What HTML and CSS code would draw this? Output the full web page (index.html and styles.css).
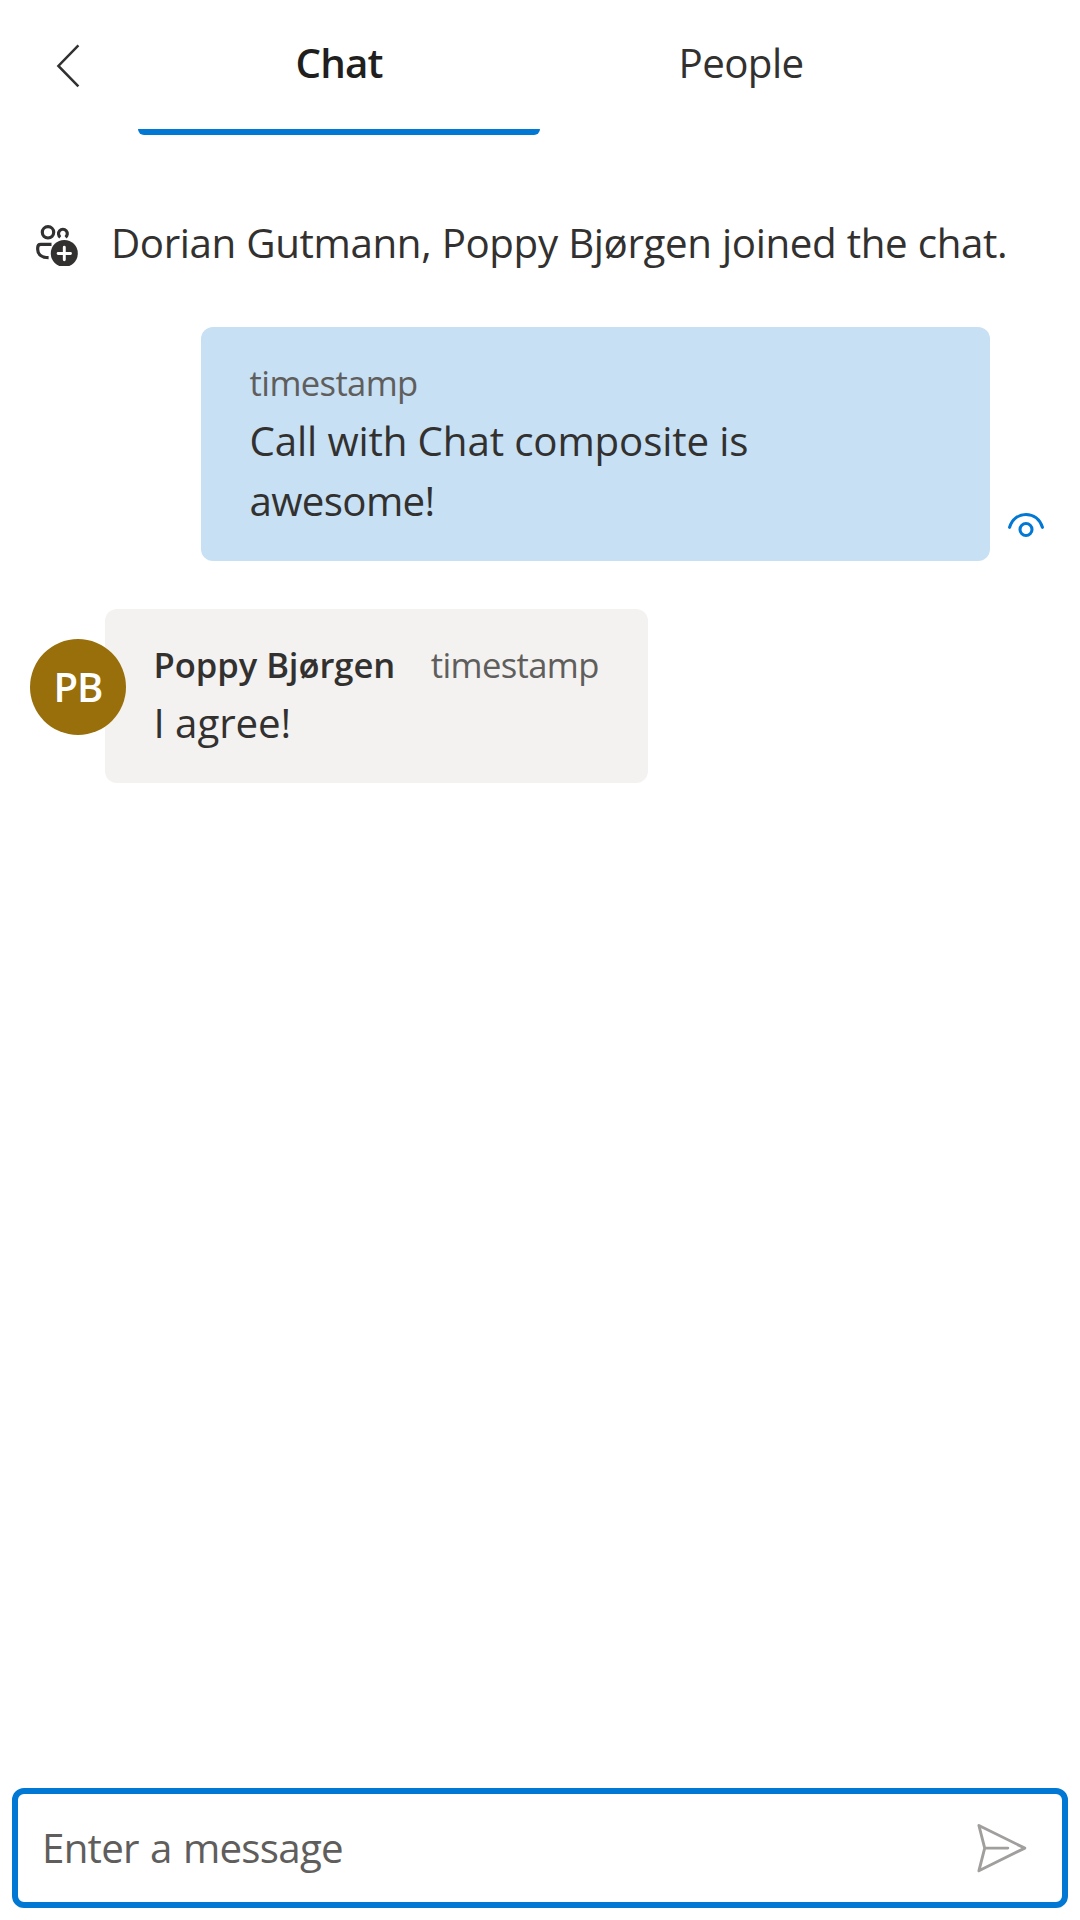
FILE: index.html
```html
<!DOCTYPE html>
<html lang="en">
<head>
<meta charset="utf-8">
<title>Chat</title>
<link rel="stylesheet" href="styles.css">
</head>
<body>
<div class="app">
  <header class="header">
    <button class="back" aria-label="Back">
      <svg width="28" height="48" viewBox="0 0 28 48" fill="none" stroke="#323130" stroke-width="2.5"><path d="M24.400 3.400 4.400 24l20 20.400"/></svg>
    </button>
    <nav class="tabs">
      <div class="tab tab-active"><span class="tab-chat">Chat</span></div>
      <div class="tab"><span class="tab-people">People</span></div>
    </nav>
  </header>
  <main class="thread">
    <div class="notice">
      <svg class="notice-icon" width="48" height="48" viewBox="0 0 48 48" fill="none" stroke="#323130" stroke-width="3.2">
        <circle cx="18" cy="14.300" r="5.700"/>
        <path d="M30.300 19.200A4.400 4.400 0 1 1 35.500 19.200"/>
        <path d="M21.500 26.400H10.700Q7.700 26.400 7.700 30V31.500C7.700 36.500 12 39.700 18.600 39.700"/>
        <circle cx="34.300" cy="35.400" r="13.500" fill="#323130" stroke="none"/>
        <path d="M34.300 29.300V41.700M28.100 35.500H40.500" stroke="#fff" stroke-width="2.900" stroke-linecap="round"/>
      </svg>
      <span class="notice-text">Dorian Gutmann, Poppy Bjørgen joined the chat.</span>
    </div>
    <div class="row row-mine">
      <div class="bubble bubble-mine">
        <div class="meta"><span class="stamp">timestamp</span></div>
        <div class="message"><span class="line-call">Call with Chat composite is</span> <span class="line-awesome">awesome!</span></div>
      </div>
      <svg class="seen" width="48" height="48" viewBox="0 0 48 48" fill="none" stroke="#0078d4" stroke-width="3.1" stroke-linecap="round">
        <path d="M7.600 20.300C10.300 12 16.700 7.500 24 7.500S37.700 12 40.400 20.300"/>
        <circle cx="24" cy="22.500" r="6"/>
      </svg>
    </div>
    <div class="row row-theirs">
      <div class="avatar"><span>PB</span></div>
      <div class="bubble bubble-theirs">
        <div class="meta"><span class="author">Poppy Bjørgen</span><span class="stamp">timestamp</span></div>
        <div class="message"><span class="line-agree">I agree!</span></div>
      </div>
    </div>
  </main>
  <footer class="composer">
    <span class="placeholder">Enter a message</span>
    <svg class="send" width="60" height="60" viewBox="0 0 60 60" fill="none" stroke="#a19f9d" stroke-width="2.900" stroke-linejoin="round" stroke-linecap="round">
      <path d="M7.900 7.500 53.800 30.100 7.900 52.800 13.700 30.100ZM13.700 30.100H36.800"/>
    </svg>
  </footer>
</div>
</body>
</html>
```
FILE: styles.css
```css
* { box-sizing: border-box; }
body {
  margin: 0;
  background: #fff;
  color: #323130;
  font-family: "Open Sans", "Noto Sans", sans-serif;
  font-size: 40.3px;
}
svg { display: block; flex: none; }
.app {
  display: flex;
  flex-direction: column;
  width: 1080px;
  height: 1920px;
}
.header { display: flex; height: 135px; }
.back {
  display: flex;
  align-items: flex-start;
  width: 138px;
  padding: 42px 0 0 54px;
  border: 0;
  background: none;
}
.tabs { display: flex; }
.tab {
  position: relative;
  width: 402px;
  line-height: 126px;
  text-align: center;
}
.tab-active { color: #201f1e; font-weight: 600; }
.tab-active::after {
  content: "";
  position: absolute;
  left: 0;
  right: 0;
  bottom: 0;
  height: 6px;
  background: #0078d4;
  border-radius: 0 0 6px 6px;
}
.tab-chat { letter-spacing: -0.85px; }
.tab-people { letter-spacing: -0.6px; }
.thread { flex: 1; padding-top: 77px; }
.notice {
  display: flex;
  align-items: center;
  gap: 33px;
  height: 60px;
  padding-left: 30px;
  line-height: 60px;
  white-space: nowrap;
}
.notice-text { padding-top: 2px; letter-spacing: -0.39px; word-spacing: 0.4px; }
.row { display: flex; }
.row-mine {
  margin-top: 55px;
  padding-left: 201px;
  align-items: flex-end;
  gap: 12px;
}
.bubble { padding: 32px 48px 30px 48.6px; border-radius: 12px; }
.bubble-mine { width: 789px; background: #c7e0f4; }
.seen { margin-bottom: 6px; }
.meta {
  display: flex;
  gap: 35.5px;
  margin-bottom: 5px;
  font-size: 34.6px;
  line-height: 47px;
  white-space: nowrap;
}
.stamp { color: #605e5c; letter-spacing: -0.63px; }
.author { font-weight: 600; letter-spacing: -0.06px; }
.message { line-height: 60px; }
.line-call { letter-spacing: -0.15px; }
.line-awesome { display: block; letter-spacing: -0.67px; }
.line-agree { letter-spacing: -0.11px; }
.row-theirs { margin-top: 48px; padding-left: 30px; }
.avatar {
  z-index: 1;
  width: 96px;
  height: 96px;
  margin: 30px -21px 0 0;
  border-radius: 50%;
  background: #986f0b;
  color: #fff;
  font-size: 40px;
  font-weight: 600;
  letter-spacing: -1px;
  line-height: 96px;
  text-align: center;
}
.bubble-theirs { width: 543px; background: #f3f2f1; }
.composer {
  display: flex;
  align-items: center;
  justify-content: space-between;
  height: 120px;
  margin: 0 12px 12px;
  padding: 0 31px 0 24px;
  border: 6px solid #0078d4;
  border-radius: 12px;
}
.placeholder { padding-bottom: 2px; color: #605e5c; letter-spacing: -0.75px; word-spacing: 1.5px; }
```
